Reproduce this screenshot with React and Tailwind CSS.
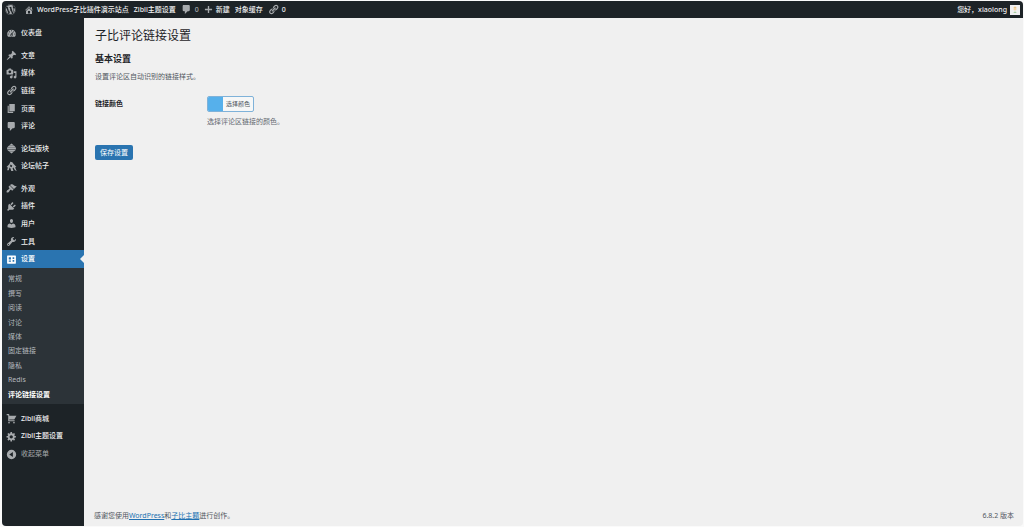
import React, { useState } from "react";
import { FaWordpress } from "react-icons/fa";
import clsx from "clsx";

// 20x20 admin glyphs
const icons = {
  home: "M16 8.5l1.53 1.53-1.06 1.06L10 4.6l-6.47 6.49-1.06-1.06L10 2.5l4 4v-2h2v4zm-6-2.46l6 5.99V18H4v-5.97zM12 17v-5H8v5h4z",
  dashboard: "M3.76 16h12.48c1.1-1.37 1.76-3.11 1.76-5 0-4.42-3.58-8-8-8s-8 3.58-8 8c0 1.89.66 3.63 1.76 5zM10 4c.55 0 1 .45 1 1s-.45 1-1 1-1-.45-1-1 .45-1 1-1zM6 6c.55 0 1 .45 1 1s-.45 1-1 1-1-.45-1-1 .45-1 1-1zm8 0c.55 0 1 .45 1 1s-.45 1-1 1-1-.45-1-1 .45-1 1-1zm-5.37 5.55L12 7v6c0 1.1-.9 2-2 2s-2-.9-2-2c0-.57.24-1.08.63-1.45zM4 10c.55 0 1 .45 1 1s-.45 1-1 1-1-.45-1-1 .45-1 1-1zm12 0c.55 0 1 .45 1 1s-.45 1-1 1-1-.45-1-1 .45-1 1-1zm-5 3c0-.55-.45-1-1-1s-1 .45-1 1 .45 1 1 1 1-.45 1-1z",
  post: "M10.44 3.02l1.82-1.82 6.36 6.35-1.83 1.82c-1.05-.68-2.48-.57-3.41.36l-.75.75c-.92.93-1.04 2.35-.35 3.41l-1.83 1.82-2.41-2.41-2.8 2.79c-.42.42-3.38 2.71-3.8 2.29s1.86-3.39 2.28-3.81l2.79-2.79L4.1 9.36l1.83-1.82c1.05.69 2.48.57 3.4-.36l.75-.75c.93-.92 1.05-2.35.36-3.41z",
  media: "M13 11V4c0-.55-.45-1-1-1h-1.67L9 1H5L3.67 3H2c-.55 0-1 .45-1 1v7c0 .55.45 1 1 1h10c.55 0 1-.45 1-1zM7 4.5c1.38 0 2.5 1.12 2.5 2.5S8.38 9.5 7 9.5 4.5 8.38 4.5 7 5.62 4.5 7 4.5zM14 6h5v10.5c0 1.38-1.12 2.5-2.5 2.5S14 17.88 14 16.5s1.12-2.5 2.5-2.5c.17 0 .34.02.5.05V9h-3V6zm-4 8.05V13h2v3.5c0 1.38-1.12 2.5-2.5 2.5S7 17.88 7 16.5 8.12 14 9.5 14c.17 0 .34.02.5.05z",
  links: "M17.74 2.76c1.68 1.69 1.68 4.41 0 6.1l-1.53 1.52c-1.12 1.12-2.7 1.47-4.14 1.09l2.62-2.61.76-.77.76-.76c.84-.84.84-2.2 0-3.04-.84-.85-2.2-.85-3.04 0l-.77.76-3.38 3.38c-.37-1.44-.02-3.02 1.1-4.14l1.52-1.53c1.69-1.68 4.42-1.68 6.1 0zM8.59 13.43l5.34-5.34c.42-.42.42-1.1 0-1.52-.44-.43-1.13-.39-1.53 0l-5.33 5.34c-.42.42-.42 1.1 0 1.52.44.43 1.13.39 1.52 0zm-.76 2.29l4.14-4.15c.38 1.44.03 3.02-1.09 4.14l-1.52 1.53c-1.69 1.68-4.41 1.68-6.1 0-1.68-1.68-1.68-4.42 0-6.1l1.53-1.52c1.12-1.12 2.7-1.47 4.14-1.1l-4.14 4.15c-.85.84-.85 2.2 0 3.05.84.84 2.2.84 3.04 0z",
  page: "M6 15V2h10v13H6zm-1 1h8v2H3V5h2v11z",
  comments: "M5 2h9c1.1 0 2 .9 2 2v7c0 1.1-.9 2-2 2h-2l-5 5v-5H5c-1.1 0-2-.9-2-2V4c0-1.1.9-2 2-2z",
  forum: "M10 1l4.5 3.5h-9zM5 5h10l2.5 2.500h-15zM2 8h16v4H2zM2.500 12.500h15L15 15H5zM5.500 15.500h9L10 19z",
  topic: "M8 1.500c3 0 4.500 1.500 5.500 3.500l5.500 6-2.500.5 3 7-3.500-2-2.500-4.500-1.500 1 1.500 5H9.500l-1.500-5-1.500-1L5 17H2l1.500-5L1 11l5-5zM8.500 6.500 7 9.500l3 2 1.500-3z",
  appearance: "M14.48 11.06L7.41 3.99l1.5-1.5c.5-.56 2.3-.47 3.51.32 1.21.8 1.43 1.28 2.91 2.1 1.18.64 2.45 1.26 4.45.85zm-.71.71L6.7 4.7 4.93 6.47c-.39.39-.39 1.02 0 1.41l1.06 1.06c.39.39.39 1.03 0 1.42-.6.6-1.43 1.11-2.21 1.69-.35.26-.7.53-1.01.84C1.43 14.23.4 16.08 1.4 17.07c.99 1 2.84-.03 4.18-1.36.31-.31.58-.66.85-1.02.57-.78 1.08-1.61 1.69-2.21.39-.39 1.02-.39 1.41 0l1.06 1.06c.39.39 1.02.39 1.41 0z",
  plugins: "M13.11 4.36L9.87 7.6 8 5.73l3.24-3.24c.35-.34 1.05-.2 1.56.32.52.51.66 1.21.31 1.55zm-8 1.77l.91-1.12 9.01 9.01-1.19.84c-.71.71-2.63 1.16-3.82 1.16H6.14L4.9 17.26c-.59.59-1.54.59-2.12 0-.59-.58-.59-1.53 0-2.12l1.24-1.24v-3.88c0-1.13.4-3.19 1.09-3.89zm7.26 3.97l3.24-3.24c.34-.35 1.04-.21 1.55.31.52.51.66 1.21.31 1.55l-3.24 3.25z",
  users: "M10 9.25c-2.27 0-2.73-3.44-2.73-3.44C7 4.02 7.82 2 9.97 2c2.16 0 2.98 2.02 2.71 3.81 0 0-.41 3.44-2.68 3.44zm0 2.57L12.72 10c2.39 0 4.52 2.33 4.52 4.53v2.49s-3.65 1.13-7.24 1.13c-3.65 0-7.24-1.13-7.24-1.13v-2.49c0-2.25 1.94-4.48 4.47-4.48z",
  tools: "M16.68 9.77c-1.34 1.34-3.3 1.67-4.95.99l-5.41 6.52c-.99.99-2.59.99-3.58 0s-.99-2.59 0-3.57l6.52-5.42c-.68-1.65-.35-3.61.99-4.95 1.28-1.28 3.12-1.62 4.72-1.06l-2.89 2.89 2.82 2.82 2.86-2.87c.53 1.58.18 3.39-1.08 4.65zM3.81 16.21c.4.39 1.04.39 1.43 0 .4-.4.4-1.04 0-1.43-.39-.4-1.03-.4-1.43 0-.39.39-.39 1.03 0 1.43z",
  settings: "M3 2.500h14a1 1 0 0 1 1 1v13a1 1 0 0 1-1 1H3a1 1 0 0 1-1-1v-13a1 1 0 0 1 1-1zM5 6v4h4V6zM5 12v2h4v-2zM12 6v3h3V6zM12 11v3h3v-3z",
  cart: "M6 13h9c.55 0 1 .45 1 1s-.45 1-1 1H5c-.55 0-1-.45-1-1V4H2c-.55 0-1-.45-1-1s.45-1 1-1h3c.55 0 1 .45 1 1v2h13l-4 7H6v1zM5.5 16a1.5 1.5 0 1 1 0 3 1.5 1.5 0 0 1 0-3zM14.500 16a1.5 1.5 0 1 1 0 3 1.5 1.5 0 0 1 0-3z",
  generic: "M18 12h-2.18c-.17.7-.44 1.35-.81 1.93l1.54 1.54-2.1 2.1-1.54-1.54c-.58.36-1.23.63-1.91.79V19H8v-2.18c-.68-.16-1.33-.43-1.91-.79l-1.54 1.54-2.12-2.12 1.54-1.54c-.36-.58-.63-1.23-.79-1.91H1V9.03h2.17c.16-.7.44-1.35.8-1.94L2.43 5.55l2.1-2.1 1.54 1.54c.58-.37 1.24-.64 1.93-.81V2h3v2.18c.68.16 1.33.43 1.91.79l1.54-1.54 2.12 2.12-1.54 1.54c.36.59.64 1.24.8 1.94H18V12zm-8.5 1.5c1.66 0 3-1.34 3-3s-1.34-3-3-3-3 1.34-3 3 1.34 3 3 3z",
  plus: "M18 8.5v3h-6.5V18h-3v-6.5H2v-3h6.5V2h3v6.5z",
  collapse: "M10 1.5a8.5 8.5 0 1 1 0 17 8.500 8.500 0 0 1 0-17zM12.500 5.500 6 10l6.500 4.500z",
};

const menuGroups = [
  { style: "h-[18px] mt-[6px]", items: [["dashboard", "仪表盘"]] },
  { style: "h-[88px] mt-[5px]", items: [["post", "文章"], ["media", "媒体"], ["links", "链接"], ["page", "页面"], ["comments", "评论"]] },
  { style: "h-[35px] mt-[5px]", items: [["forum", "论坛版块"], ["topic", "论坛帖子"]] },
  { style: "h-[88px] mt-[5px]", items: [["appearance", "外观"], ["plugins", "插件"], ["users", "用户"], ["tools", "工具"], ["settings", "设置"]] },
];

const subMenu = ["常规", "撰写", "阅读", "讨论", "媒体", "固定链接", "隐私", "Redis", "评论链接设置"];

const Icon = ({ name, className }) => (
  <svg viewBox="0 0 20 20" fill="currentColor" fillRule="evenodd" aria-hidden="true" className={clsx("shrink-0", className)}>
    <path d={icons[name]} />
  </svg>
);

const MenuItem = ({ icon, label }) => {
  const active = icon === "settings";
  return (
    <li className={clsx("flex", active ? "relative bg-[#2a74b0] text-white" : "text-[#f0f0f1]")}>
      <a href="#" className="flex flex-1 items-center gap-1 pl-1 font-medium">
        <Icon name={icon} className={clsx("size-[11px]", !active && "text-[#a7aaad]")} />
        {label}
      </a>
      {/* Arrow pointing at the page */}
      {active && <span className="absolute right-0 top-1/2 -translate-y-1/2 border-y-4 border-r-4 border-y-transparent border-r-[#f0f0f0]" />}
    </li>
  );
};

const AdminBar = () => (
  <header className="flex h-[17px] items-center justify-between bg-[#1d2327] pl-[3px] pr-[3px] font-medium text-[#f0f0f1]">
    <nav className="flex items-center gap-[5px]">
      <a href="#" aria-label="WordPress" className="mr-[3px] text-[#a7aaad]"><FaWordpress className="size-[11px]" /></a>
      <a href="#" className="flex items-center gap-[3px]">
        <Icon name="home" className="size-[10px] text-[#a7aaad]" />
        WordPress子比插件演示站点
      </a>
      <a href="#">Zibll主题设置</a>
      <a href="#" className="flex items-center gap-[3px] text-[#a7aaad]">
        <Icon name="comments" className="size-[11px]" />
        0
      </a>
      <a href="#" className="flex items-center gap-[3px]">
        <Icon name="plus" className="size-[9px] text-[#a7aaad]" />
        新建
      </a>
      <a href="#">对象缓存</a>
      <a href="#" className="flex items-center gap-[3px]">
        <Icon name="links" className="size-[11px] text-[#a7aaad]" />
        0
      </a>
    </nav>
    <a href="#" className="flex items-center gap-[3px]">
      您好，xiaolong
      <svg viewBox="0 0 10 10" aria-hidden="true" className="size-[10px] bg-[#f0f0f1]">
        <circle cx="5" cy="4" r="1.5" fill="#f3d3a4" />
        <path d="M3.500 3a1.500 1.500 0 0 1 3 0z" fill="#e8c68a" />
        <path d="M3.500 8a1.500 1.500 0 0 1 3 0z" fill="#a9cfa0" />
      </svg>
    </a>
  </header>
);

const Sidebar = () => (
  <aside className="w-[82px] shrink-0 bg-[#1d2327]">
    {menuGroups.map((group) => (
      <ul key={group.items[0][0]} className={clsx("grid auto-rows-fr", group.style)}>
        {group.items.map(([icon, label]) => <MenuItem key={icon} icon={icon} label={label} />)}
      </ul>
    ))}

    {/* Settings submenu */}
    <ul className="grid h-[136px] auto-rows-fr bg-[#2c3338] pb-[2px] pt-1 text-[#b4b9be]">
      {subMenu.map((label) => (
        <li key={label} className="flex">
          <a href="#" className={clsx("flex flex-1 items-center pl-[6px]", label === "评论链接设置" && "font-bold text-white")}>{label}</a>
        </li>
      ))}
    </ul>

    <ul className="mt-[6px] grid h-[53px] auto-rows-fr">
      <MenuItem icon="cart" label="Zibll商城" />
      <MenuItem icon="generic" label="Zibll主题设置" />
      <li className="flex">
        <button type="button" className="flex flex-1 items-center gap-1 pl-1 text-[#a7aaad]">
          <Icon name="collapse" className="size-[11px]" />
          收起菜单
        </button>
      </li>
    </ul>
  </aside>
);

export default function App() {
  const [color] = useState("#56b0eb");

  return (
    <div className="flex min-h-screen bg-[#fafafa] py-px pl-[2px] pr-px font-['Noto_Sans','Noto_Sans_CJK_SC',sans-serif] text-[7px] leading-[10px]">
      <div className="flex flex-1 flex-col overflow-hidden rounded-[4px] bg-[#f0f0f0]">
        <AdminBar />
        <div className="flex flex-1">
          <Sidebar />
          <div className="flex flex-1 flex-col pl-[10px] pr-[9px] text-[#50575e]">
            <main className="flex-1 pl-px">
              <h1 className="mt-[9px] text-[12px] leading-[18px] text-[#1d2327]">子比评论链接设置</h1>
              <form onSubmit={(e) => e.preventDefault()}>
                <h2 className="mt-2 text-[9px] font-bold leading-[12px] text-[#1d2327]">基本设置</h2>
                <p className="mt-[7px]">设置评论区自动识别的链接样式。</p>
                <div className="mt-[14px] flex">
                  <label htmlFor="link-color" className="w-[112px] pt-[3px] font-bold text-[#1d2327]">链接颜色</label>
                  <div>
                    <button id="link-color" type="button" className="flex h-4 items-stretch overflow-hidden rounded-[2px] border border-[#7fb2d9] bg-[#f6f7f7] text-[6px] text-[#50575e]">
                      <span className="w-[15px]" style={{ backgroundColor: color }} />
                      <span className="flex items-center px-[3px]">选择颜色</span>
                    </button>
                    <p className="mt-[5px] text-[#646970]">选择评论区链接的颜色。</p>
                  </div>
                </div>
                <button type="submit" className="mt-[18px] h-[15px] rounded-[2px] bg-[#2a74b0] px-[5px] text-white">保存设置</button>
              </form>
            </main>
            <footer className="flex justify-between pb-[5px]">
              <p>
                感谢您使用<a href="#" className="text-[#2271b1] underline">WordPress</a>和<a href="#" className="text-[#2271b1] underline">子比主题</a>进行创作。
              </p>
              <p>6.8.2 版本</p>
            </footer>
          </div>
        </div>
      </div>
    </div>
  );
}
